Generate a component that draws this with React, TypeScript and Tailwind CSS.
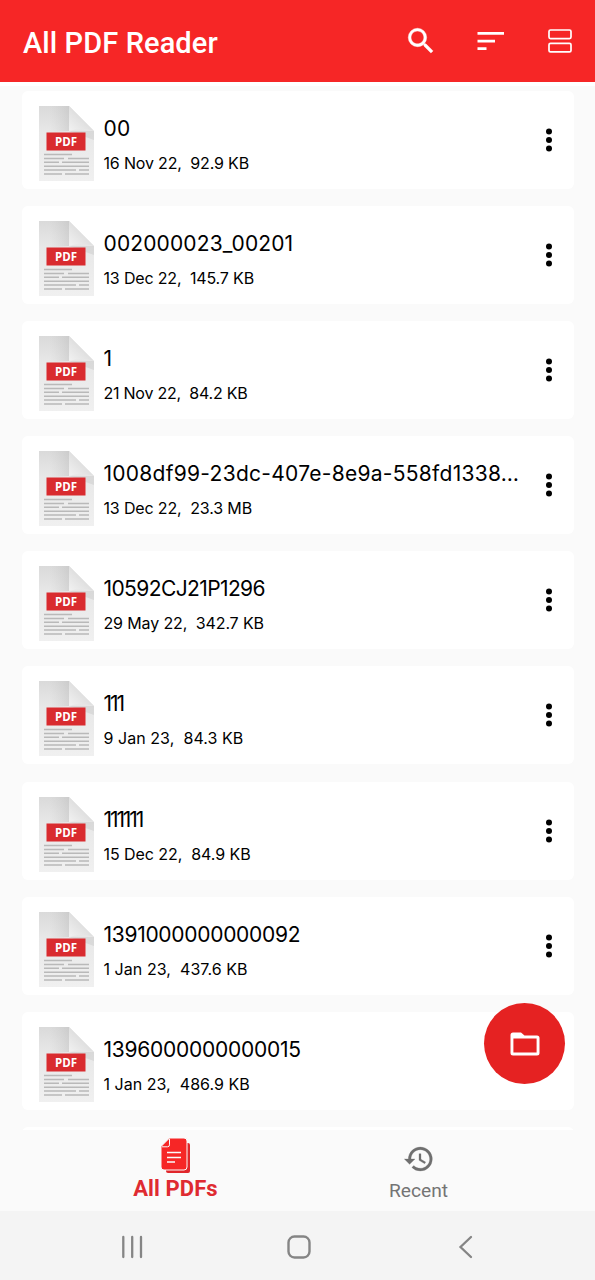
type PdfFile = {
    name: string;
    date: string;
    size: string;
    nameClass: string;
    infoClass: string;
};

const files: PdfFile[] = [
    { name: "00", date: "16 Nov 22,", size: "92.9 KB", nameClass: "tracking-[0.3px]", infoClass: "tracking-[-0.17px]" },
    { name: "002000023_00201", date: "13 Dec 22,", size: "145.7 KB", nameClass: "tracking-[0.13px]", infoClass: "tracking-[-0.17px]" },
    { name: "1", date: "21 Nov 22,", size: "84.2 KB", nameClass: "tracking-normal", infoClass: "tracking-[-0.24px]" },
    { name: "1008df99-23dc-407e-8e9a-558fd1338…", date: "13 Dec 22,", size: "23.3 MB", nameClass: "tracking-[0.27px]", infoClass: "tracking-[-0.15px]" },
    { name: "10592CJ21P1296", date: "29 May 22,", size: "342.7 KB", nameClass: "tracking-[-0.6px]", infoClass: "tracking-[-0.14px]" },
    { name: "111", date: "9 Jan 23,", size: "84.3 KB", nameClass: "tracking-[-2px]", infoClass: "tracking-[0.05px]" },
    { name: "111111", date: "15 Dec 22,", size: "84.9 KB", nameClass: "tracking-[-2.1px]", infoClass: "tracking-[-0.06px]" },
    { name: "1391000000000092", date: "1 Jan 23,", size: "437.6 KB", nameClass: "tracking-[-0.29px]", infoClass: "tracking-[0.05px]" },
    { name: "1396000000000015", date: "1 Jan 23,", size: "486.9 KB", nameClass: "tracking-[-0.25px]", infoClass: "tracking-[0.03px]" },
];

const PdfIcon = () => (
    <svg className="h-[75px] w-14 shrink-0" viewBox="0 0 56 75">
        <defs>
            <linearGradient id="page" x1="0" y1="0" x2="0" y2="1">
                <stop offset="0" stopColor="#dadada" />
                <stop offset="0.35" stopColor="#e8e8e8" />
                <stop offset="1" stopColor="#f0f0f0" />
            </linearGradient>
            <linearGradient id="fold" x1="0" y1="1" x2="1" y2="0">
                <stop offset="0" stopColor="#f2f2f2" />
                <stop offset="1" stopColor="#cdcdcd" />
            </linearGradient>
            <linearGradient id="shade" x1="0" y1="0" x2="1" y2="0">
                <stop offset="0" stopColor="#bbb" stopOpacity="0" />
                <stop offset="1" stopColor="#aaa" stopOpacity="0.3" />
            </linearGradient>
        </defs>
        <path d="M1 0H31L56 25V75H1Z" fill="url(#page)" />
        <path d="M12 0H31V25L12 26Z" fill="url(#shade)" />
        <path d="M31 25H56V34Z" fill="#c4c4c4" opacity="0.4" />
        <path d="M31 0L56 25Q44 21 31 25Z" fill="url(#fold)" />
        <rect x="8.500" y="26.500" width="39" height="18" fill="#d92b2f" />
        <text x="28" y="39.500" textAnchor="middle" fill="#fff" fontSize="11.5" fontWeight="700" fontFamily="Open Sans, sans-serif" textLength="22" lengthAdjust="spacingAndGlyphs">PDF</text>
        <path d="M6 48.5H34M6 52.5H26M30 52.5H51M6 56.3H21M24 56.3H51M6 60.2H51M6 64H38M41 64H51M6 68H24M27 68H51" stroke="#b9b9b9" strokeWidth="1.5" fill="none" />
    </svg>
);

const Header = () => (
    <header className="flex h-[82px] shrink-0 items-center bg-[#f62626] pl-[23px] text-white">
        <h1 className="w-[381px] text-[29px] font-medium leading-9">
            <span className="inline-block whitespace-nowrap pt-1 tracking-[0.1px]">All PDF Reader</span>
        </h1>
        <svg className="h-[34px] w-[34px]" viewBox="0 0 24 24" fill="#fff" stroke="#fff" strokeWidth="0.3">
            <path d="M15.5 14h-.79l-.28-.27A6.471 6.471 0 0 0 16 9.500 6.500 6.500 0 1 0 9.500 16c1.610 0 3.090-.59 4.230-1.570l.27.28v.79l5 4.990L20.490 19l-4.990-5zm-6 0C7.010 14 5 11.990 5 9.500S7.010 5 9.500 5 14 7.010 14 9.500 11.990 14 9.500 14z" />
        </svg>
        <svg className="ml-[38.5px] h-5 w-[27px]" viewBox="0 0 27 20" fill="#fff">
            <path d="M0.500 1h26.500v2.800H0.500zM0.500 8.700h17.500v2.800H0.500zM0.500 16.200h9v2.800H0.500z" />
        </svg>
        <svg className="ml-[44.5px] h-6 w-6" viewBox="0 0 24 24" fill="none" stroke="#fff" strokeWidth="1.700">
            <rect x="1" y="1" width="22" height="8.600" rx="1.500" />
            <rect x="1" y="14.300" width="22" height="8.600" rx="1.500" />
        </svg>
    </header>
);

const FileCard = ({ file }: { file: PdfFile }) => (
    <li className="flex h-[98px] shrink-0 items-center rounded-md bg-white pl-4 pr-[21px]">
        <div className="pt-[7px]">
            <PdfIcon />
        </div>
        <div className="ml-2.5 min-w-0 flex-1 whitespace-nowrap pt-3 text-black">
            <p className={`text-[21px] leading-[34px] ${file.nameClass}`}>{file.name}</p>
            <p className={`whitespace-pre text-base leading-[34px] ${file.infoClass}`}>{`${file.date}  ${file.size}`}</p>
        </div>
        <svg className="h-6 w-2" viewBox="0 0 8 24">
            <circle cx="4" cy="3.500" r="3" />
            <circle cx="4" cy="12" r="3" />
            <circle cx="4" cy="20.500" r="3" />
        </svg>
    </li>
);

const BottomTabs = () => (
    <nav className="flex h-[81px] shrink-0 bg-[#fafafa] pl-[54px] pr-[55px]">
        <div className="flex w-[243px] flex-col items-center pt-2">
            <svg className="h-[35px] w-[30px]" viewBox="0 0 30 35">
                <path d="M5 5H27Q29 5 29 7V33Q29 35 27 35H7Q5 35 5 33Z" fill="#e0262b" />
                <path d="M8.500 0H23Q26 0 26 3V29Q26 32 23 32H3Q0 32 0 29V8.500Z" fill="#f62626" stroke="#fafafa" strokeWidth="1" />
                <path d="M1 8.800H6.500Q8.500 8.800 8.500 6.800V1" fill="none" stroke="#fafafa" />
                <path d="M6 14.500H20M6 19.500H20M6 24H14" stroke="#fafafa" strokeWidth="1.700" />
            </svg>
            <span className="pt-px text-[22px] font-bold leading-[30px] tracking-[0.1px] text-[#df2b31]">All PDFs</span>
        </div>
        <div className="flex w-[243px] flex-col items-center pt-[13px]">
            <svg className="h-8 w-8" viewBox="0 0 24 24" fill="#6f6f6f" stroke="#6f6f6f" strokeWidth="0.2">
                <path d="M13 3a9 9 0 0 0-9 9H1l3.890 3.890.07.14L9 12H6c0-3.870 3.130-7 7-7s7 3.130 7 7-3.130 7-7 7c-1.930 0-3.680-.79-4.940-2.060l-1.420 1.420A8.954 8.954 0 0 0 13 21a9 9 0 0 0 0-18zm-1 5v5l4.280 2.540.72-1.210-3.500-2.080V8H12z" />
            </svg>
            <span className="text-[19.2px] leading-[31px] text-[#747474]">Recent</span>
        </div>
    </nav>
);

const SystemBar = () => (
    <footer className="flex h-[69px] shrink-0 items-center bg-[#f4f4f4] pl-5 pt-0.5">
        <svg className="ml-[100px] h-6 w-6" viewBox="0 0 24 24" stroke="#858585" strokeWidth="2.300" strokeLinecap="round">
            <path d="M3.300 2V22M12.200 2V22M21 2V22" />
        </svg>
        <svg className="ml-[142.5px] h-6 w-6" viewBox="0 0 24 24" fill="none" stroke="#858585" strokeWidth="2.400">
            <rect x="1.500" y="1.500" width="21" height="21" rx="6" />
        </svg>
        <svg className="ml-[147.5px] h-6 w-4" viewBox="0 0 16 24" fill="none" stroke="#858585" strokeWidth="2.300" strokeLinecap="round">
            <path d="M13 2L2.500 12L13 22" />
        </svg>
    </footer>
);

const App = () => {
    return (
        <div className="relative flex h-[1280px] w-[595px] flex-col overflow-hidden bg-[#fafafa] font-['Roboto',sans-serif]">
            <Header />
            <main className="min-h-0 flex-1 overflow-hidden border-t-4 border-white px-[21.5px] pt-[4.6px] font-['Inter',sans-serif]">
                <ul className="flex flex-col gap-[17.16px]">
                    {files.map((file) => (
                        <FileCard key={file.name} file={file} />
                    ))}
                    <li className="h-[98px] shrink-0 rounded-md bg-white" />
                </ul>
            </main>
            <BottomTabs />
            <SystemBar />
            <button aria-label="Browse folders" className="absolute left-[484px] top-[1003px] flex h-[81px] w-[81px] items-center justify-center rounded-full bg-[#e52222]">
                <svg className="h-6 w-[30px]" viewBox="0 0 30 24">
                    <path fill="#fff" fillRule="evenodd" d="M3 0.500H11L14.500 3.500H27Q29.500 3.500 29.500 6V21Q29.500 23.500 27 23.500H3Q0.500 23.500 0.500 21V3Q0.500 0.500 3 0.500ZM3.400 6.400V20.600H26.600V6.400Z" />
                </svg>
            </button>
        </div>
    );
};

export default App;
